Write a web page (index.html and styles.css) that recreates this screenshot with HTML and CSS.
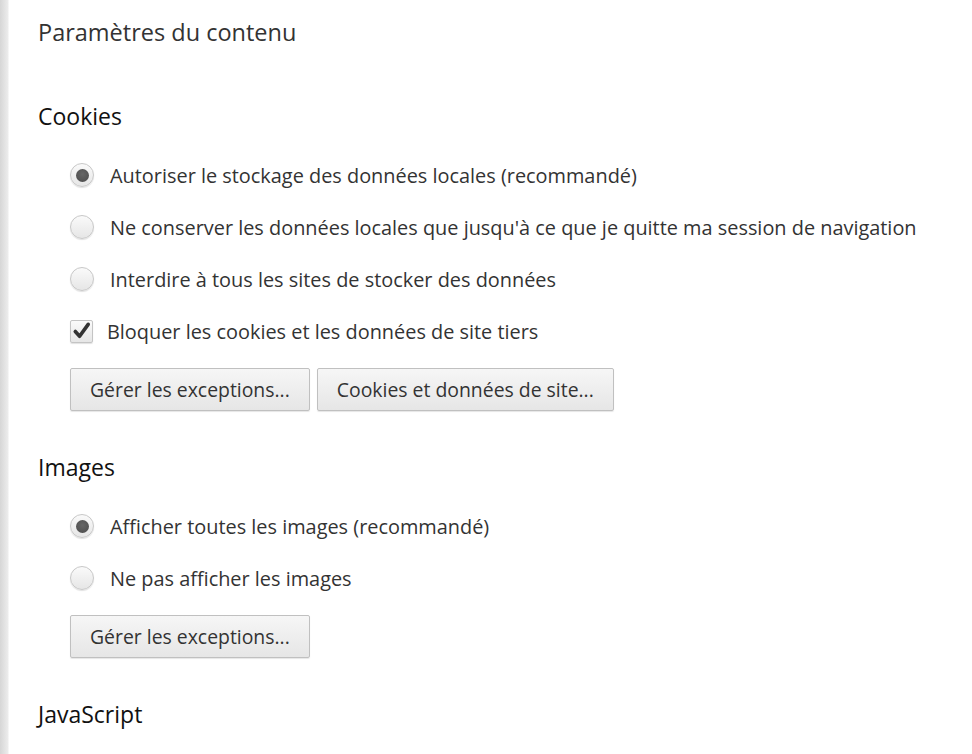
FILE: index.html
```html
<!DOCTYPE html>
<html lang="fr">
<head>
<meta charset="utf-8">
<title>Paramètres du contenu</title>
<link rel="stylesheet" href="styles.css">
</head>
<body>
<div class="page">
  <h1 class="title">Paramètres du contenu</h1>

  <section class="section first">
    <h2 class="section-title">Cookies</h2>
    <div class="options">
      <label class="option"><span class="radio checked"></span><span class="label">Autoriser le stockage des données locales (recommandé)</span></label>
      <label class="option"><span class="radio"></span><span class="label">Ne conserver les données locales que jusqu'à ce que je quitte ma session de navigation</span></label>
      <label class="option"><span class="radio"></span><span class="label">Interdire à tous les sites de stocker des données</span></label>
      <label class="option"><span class="checkbox"><svg viewBox="0 0 22 22" width="22" height="22"><path d="M4.5 11.5 L9 16.5 L18 4" fill="none" stroke="#333" stroke-width="3.8" stroke-linecap="round" stroke-linejoin="round"/></svg></span><span class="label cb-label">Bloquer les cookies et les données de site tiers</span></label>
    </div>
    <div class="buttons">
      <button class="btn">Gérer les exceptions...</button>
      <button class="btn">Cookies et données de site...</button>
    </div>
  </section>

  <section class="section">
    <h2 class="section-title">Images</h2>
    <div class="options">
      <label class="option"><span class="radio checked"></span><span class="label">Afficher toutes les images (recommandé)</span></label>
      <label class="option"><span class="radio"></span><span class="label">Ne pas afficher les images</span></label>
    </div>
    <div class="buttons">
      <button class="btn">Gérer les exceptions...</button>
    </div>
  </section>

  <section class="section">
    <h2 class="section-title">JavaScript</h2>
  </section>
</div>
</body>
</html>
```

FILE: styles.css
```css
html, body {
  margin: 0;
  padding: 0;
  height: 100%;
}
body {
  background: linear-gradient(to right, #d6d6d6 0, #ececec 8px, #ffffff 9px);
  font-family: "Open Sans", "Noto Sans", sans-serif;
  color: #333;
  overflow: hidden;
}
.page {
  padding: 16px 0 0 38px;
}
.title {
  margin: 0;
  font-size: 23.5px;
  font-weight: 400;
  color: #333;
  line-height: 32px;
}
.section {
  margin-top: 40px;
}
.section.first {
  margin-top: 52px;
}
.section-title {
  margin: 0;
  font-size: 23px;
  font-weight: 400;
  color: #111;
  line-height: 32px;
}
.options {
  display: flex;
  flex-direction: column;
  padding-left: 32px;
  margin-top: 17px;
}
.option {
  display: flex;
  align-items: center;
  height: 52px;
}
.radio {
  width: 22px;
  height: 22px;
  border-radius: 50%;
  border: 1px solid #c8c8c8;
  background: linear-gradient(#fafafa, #e6e6e6);
  box-shadow: 0 1px 1px rgba(0,0,0,0.12);
  display: flex;
  align-items: center;
  justify-content: center;
  flex: none;
}
.radio.checked::after {
  content: "";
  width: 13px;
  height: 13px;
  border-radius: 50%;
  background: radial-gradient(circle at 50% 40%, #666, #4a4a4a);
}
.checkbox {
  width: 21px;
  height: 21px;
  border-radius: 2px;
  border: 1px solid #c4c4c4;
  background: linear-gradient(#fafafa, #e6e6e6);
  box-shadow: 0 1px 1px rgba(0,0,0,0.12);
  display: flex;
  align-items: center;
  justify-content: center;
  flex: none;
}
.label {
  margin-left: 16px;
  font-size: 19.9px;
}
.cb-label {
  margin-left: 14px;
}
.buttons {
  display: flex;
  gap: 7px;
  padding-left: 32px;
  margin-top: 11px;
}
.btn {
  font-family: inherit;
  font-size: 19.4px;
  color: #333;
  height: 43px;
  padding: 0 19px 1px;
  border: 1px solid #c0c0c0;
  border-radius: 2px;
  background: linear-gradient(#f6f6f6, #e6e6e6);
  box-shadow: 0 1px 1px rgba(0,0,0,0.1);
}
```
